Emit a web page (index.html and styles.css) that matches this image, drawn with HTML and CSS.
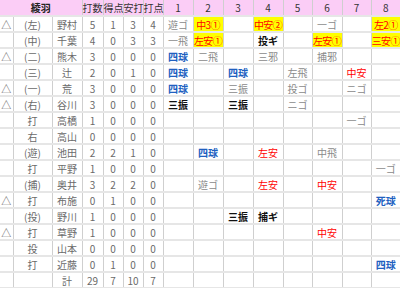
FILE: index.html
```html
<!DOCTYPE html>
<html lang="ja">
<head>
<meta charset="utf-8">
<link rel="stylesheet" href="styles.css">
</head>
<body>
<div class="wrap">
<table class="score">
<colgroup>
<col class="c-mark"><col class="c-pos"><col class="c-name">
<col class="c-num1"><col class="c-num"><col class="c-num"><col class="c-num">
<col class="c-inn"><col class="c-inn"><col class="c-inn"><col class="c-inn">
<col class="c-inn5"><col class="c-inn"><col class="c-inn5"><col class="c-inn5">
</colgroup>
<thead>
<tr><th colspan="3" class="team">綾羽</th><th>打数</th><th>得点</th><th>安打</th><th>打点</th><th>1</th><th>2</th><th>3</th><th>4</th><th>5</th><th>6</th><th>7</th><th>8</th></tr>
</thead>
<tbody>
<tr><td>△</td><td>(左)</td><td>野村</td><td>5</td><td>1</td><td>3</td><td>4</td><td class="out">遊ゴ</td><td class="rbi">中3①</td><td></td><td class="rbi">中安②</td><td></td><td class="out">一ゴ</td><td></td><td class="rbi">左2①</td></tr>
<tr><td></td><td>(中)</td><td>千葉</td><td>4</td><td>0</td><td>3</td><td>3</td><td class="out">一飛</td><td class="rbi">左安①</td><td></td><td class="so">投ギ</td><td></td><td class="rbi">左安①</td><td></td><td class="rbi">三安①</td></tr>
<tr><td>△</td><td>(二)</td><td>熊木</td><td>3</td><td>0</td><td>0</td><td>0</td><td class="bb">四球</td><td class="out">二飛</td><td></td><td class="out">三邪</td><td></td><td class="out">捕邪</td><td></td><td></td></tr>
<tr><td></td><td>(三)</td><td>辻</td><td>2</td><td>0</td><td>1</td><td>0</td><td class="bb">四球</td><td></td><td class="bb">四球</td><td></td><td class="out sel">左飛</td><td></td><td class="hit">中安</td><td></td></tr>
<tr><td>△</td><td>(一)</td><td>荒</td><td>3</td><td>0</td><td>0</td><td>0</td><td class="bb">四球</td><td></td><td class="out">三振</td><td></td><td class="out">投ゴ</td><td></td><td class="out">ニゴ</td><td></td></tr>
<tr><td>△</td><td>(右)</td><td>谷川</td><td>3</td><td>0</td><td>0</td><td>0</td><td class="so">三振</td><td></td><td class="so">三振</td><td></td><td class="out">ニゴ</td><td></td><td></td><td></td></tr>
<tr><td></td><td>打</td><td>高橋</td><td>1</td><td>0</td><td>0</td><td>0</td><td></td><td></td><td></td><td></td><td></td><td></td><td class="out">一ゴ</td><td></td></tr>
<tr><td></td><td>右</td><td>高山</td><td>0</td><td>0</td><td>0</td><td>0</td><td></td><td></td><td></td><td></td><td></td><td></td><td></td><td></td></tr>
<tr><td></td><td>(遊)</td><td>池田</td><td>2</td><td>2</td><td>1</td><td>0</td><td></td><td class="bb">四球</td><td></td><td class="hit">左安</td><td></td><td class="out">中飛</td><td></td><td></td></tr>
<tr><td></td><td>打</td><td>平野</td><td>1</td><td>0</td><td>0</td><td>0</td><td></td><td></td><td></td><td></td><td></td><td></td><td></td><td class="out sel">一ゴ</td></tr>
<tr><td></td><td>(捕)</td><td>奥井</td><td>3</td><td>2</td><td>2</td><td>0</td><td></td><td class="out">遊ゴ</td><td></td><td class="hit">左安</td><td></td><td class="hit">中安</td><td></td><td></td></tr>
<tr><td>△</td><td>打</td><td>布施</td><td>0</td><td>1</td><td>0</td><td>0</td><td></td><td></td><td></td><td></td><td></td><td></td><td></td><td class="bb">死球</td></tr>
<tr><td></td><td>(投)</td><td>野川</td><td>1</td><td>0</td><td>0</td><td>0</td><td></td><td></td><td class="so">三振</td><td class="so">捕ギ</td><td></td><td></td><td></td><td></td></tr>
<tr><td>△</td><td>打</td><td>草野</td><td>1</td><td>0</td><td>0</td><td>0</td><td></td><td></td><td></td><td></td><td></td><td class="hit">中安</td><td></td><td></td></tr>
<tr><td></td><td>投</td><td>山本</td><td>0</td><td>0</td><td>0</td><td>0</td><td></td><td></td><td></td><td></td><td></td><td></td><td></td><td></td></tr>
<tr><td></td><td>打</td><td>近藤</td><td>0</td><td>1</td><td>0</td><td>0</td><td></td><td></td><td></td><td></td><td></td><td></td><td></td><td class="bb">四球</td></tr>
<tr><td></td><td></td><td>計</td><td>29</td><td>7</td><td>10</td><td>7</td><td></td><td></td><td></td><td></td><td></td><td></td><td></td><td></td></tr>
</tbody>
</table>
</div>
</body>
</html>
```
FILE: styles.css
```css
html, body {
  margin: 0;
  padding: 0;
  background: #ffffff;
}
.wrap {
  width: 400px;
  height: 288px;
  overflow: hidden;
}
.score {
  border-collapse: collapse;
  table-layout: fixed;
  width: 400px;
  font-family: "Noto Sans CJK JP", "Noto Sans", sans-serif;
  font-size: 10px;
  color: #6a6a6a;
}
.c-mark { width: 13px; }
.c-pos { width: 39px; }
.c-name { width: 30px; }
.c-num1 { width: 21px; }
.c-num { width: 20px; }
.c-inn { width: 30px; }
.c-inn5 { width: 29px; }
.score th, .score td {
  height: 16px;
  padding: 0;
  box-sizing: border-box;
  text-align: center;
  vertical-align: middle;
  line-height: 13px;
  white-space: nowrap;
  border-left: 1px solid #cfcfcf;
  border-right: 1px solid #cfcfcf;
  border-top: 2px solid #e6e6e6;
  border-bottom: 2px solid #e6e6e6;
}
.score thead th {
  background: #fbcdf6;
  color: #333333;
  font-weight: normal;
  border-top: none;
}
.score thead th.team {
  font-weight: bold;
  color: #222222;
}
.score td:first-child, .score th:first-child {
  border-left: none;
}
.score td:last-child, .score th:last-child {
  border-right: none;
}
.score td.out { color: #8a8a8a; }
.score td.so { color: #111111; font-weight: bold; }
.score td.bb { color: #2060c0; font-weight: bold; }
.score td.hit { color: #ff0000; }
.score td.rbi { color: #ff0000; background: #ffff00; letter-spacing: -0.6px; }
.score td.sel { border-top-color: #a8d8a8; }
```
